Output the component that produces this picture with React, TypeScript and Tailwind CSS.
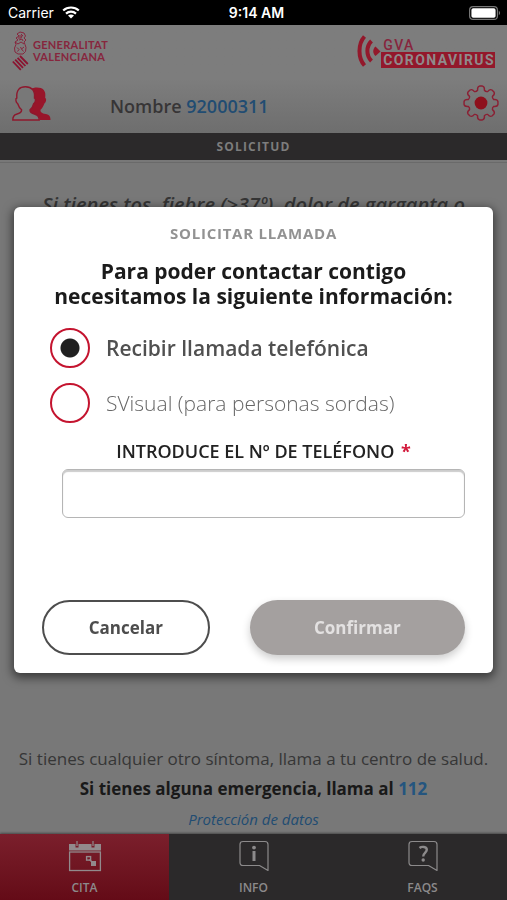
import React, { useState } from 'react';

const point = (radius: number, degrees: number) => {
  const a = (degrees * Math.PI) / 180;
  return `${(18 + radius * Math.cos(a)).toFixed(2)} ${(18 + radius * Math.sin(a)).toFixed(2)}`;
};

// Eight rounded teeth, 45 degrees apart
const gearPath =
  Array.from({ length: 8 }, (_, i) => {
    const t = i * 45;
    return `${i === 0 ? 'M' : 'L'}${point(13.2, t - 15)} Q${point(16.8, t - 13)} ${point(17, t - 5)} L${point(17, t + 5)} Q${point(16.8, t + 13)} ${point(13.2, t + 15)} Q${point(12, t + 22)} ${point(13.2, t + 30)}`;
  }).join(' ') + 'Z';

const GearIcon = () => (
  <svg viewBox="0 0 36 36" className="w-9 h-9" aria-hidden="true">
    <path d={gearPath} fill="none" stroke="#8b1f33" strokeWidth="1.4" strokeLinejoin="round" />
    <circle cx="18" cy="18" r="6.4" fill="#8e101c" />
  </svg>
);

const PeopleIcon = () => (
  <svg viewBox="0 0 39 35" className="w-[39px] h-[35px]" aria-hidden="true">
    <path
      d="M19 3C22 1 29 .8 31.8 4C33.8 6.5 33.4 9 33.2 12C34.8 12.5 34.2 16.5 32.4 17.5C31.4 20.5 30 22.5 28.5 23.8C28.2 26.5 30 27.3 33.5 28C37.500 28.8 38.5 30.5 38.5 34H27.5C27.5 30.5 26 29 22 28C19.5 27.3 17.5 26.5 17.5 24C20 21.5 21 18.5 21.8 17.5C23.5 16 23.5 12.5 22.3 12C23 8 22.5 5 19 3Z"
      fill="#98152a"
    />
    <path
      d="M13.5 .8C7.5 .8 4.2 4 4.8 12C3.2 12.5 3.8 16.5 5.6 17.500C6.6 20.5 8 22.5 9.6 23.8C9.8 26.5 8 27.4 4.5 28.200C1.3 29 .8 31 .8 34H27.2C27.2 31 26.5 29 23 28.2C19.5 27.4 17.8 26.5 18 23.8C19.8 22.500 21 20.5 21.800 17.5C23.7 16.5 24 12.500 22.5 12C23.3 4.500 19.5 .8 13.5 .8Z"
      fill="#787878"
      stroke="#8e182d"
      strokeWidth="1.4"
    />
  </svg>
);

const CrestIcon = () => (
  <svg viewBox="0 0 17 40" className="w-[17px] h-10" fill="none" stroke="#87263d" aria-hidden="true">
    <path d="M5 3L8 1L12 2L13.5 5L12 7L14 9L12 11M5 3L7 5L4 7L6 9L3 11M7 5H10L9 7H6M3 11L4 13.5M12 11L13 13.5M3 11L6 13L9 11L12 13M7 9L10 8L11 10M9 3L11 5" />
    <path d="M4 13.5L2.5 17L3 21L6 23H11L13.5 20.5L14 16.5L13 13.5M5 16.5L7 18.5L5.5 20.5M12 16L9.5 18L8.5 16M9.5 18L11.5 20.5" />
    <path d="M.8 30.5L8.8 38.8M3.2 28.6L11 36.8M5.6 26.8L13.4 35M8 25L15.8 33" stroke="#8a1430" strokeWidth="1.8" />
  </svg>
);

const SignalIcon = () => (
  <svg viewBox="0 0 24 32" className="w-6 h-8" fill="none" stroke="#93182b" aria-hidden="true">
    <path d="M7.5 1.5C.8 9 .8 23 7.500 30.5" strokeWidth="4" />
    <path d="M14.5 6C9 11.5 9 20.5 14.5 26" strokeWidth="4" />
    <path d="M18.5 11.5C15.5 14 15.5 18.5 18.5 21L23.5 16.5Z" fill="#93182b" stroke="none" />
  </svg>
);

const WifiIcon = () => (
  <svg viewBox="0 0 18 13" className="w-[18px] h-[13px]" fill="none" stroke="#fff" strokeWidth="2.2" aria-hidden="true">
    <path d="M1.2 4.5C5.5 .5 12.5 .5 16.8 4.5" />
    <path d="M4 7.6C6.8 5 11.2 5 14 7.6" />
    <path d="M9 12.5L6 9.6C7.8 8.2 10.2 8.2 12 9.6Z" fill="#fff" stroke="none" />
  </svg>
);

const BatteryIcon = () => (
  <svg viewBox="0 0 32 14" className="w-8 h-3.5" aria-hidden="true">
    <rect x=".6" y=".6" width="27.8" height="12.8" rx="3.5" fill="none" stroke="#777" strokeWidth="1.2" />
    <rect x="2.4" y="2.2" width="24.2" height="9.6" rx="1.8" fill="#fff" />
    <path d="M29.8 4.8C31.5 5.5 31.5 8.5 29.8 9.2Z" fill="#777" />
  </svg>
);

const CalendarIcon = () => (
  <svg viewBox="0 0 34 32" className="w-[34px] h-8" aria-hidden="true">
    <path d="M1 4H7.5V7.5H10.5V4H23.5V7.5H26.5V4H33V10.5H1Z" fill="#928a8c" />
    <path d="M9 1V6M25 1V6" stroke="#928a8c" strokeWidth="1.2" />
    <rect x="1.6" y="12" width="30.8" height="18.5" fill="none" stroke="#928a8c" strokeWidth="1.3" />
    <rect x="18.6" y="16.6" width="4" height="3.5" fill="none" stroke="#928a8c" strokeWidth="1.4" />
    <path d="M23 21H28V26H23Z" fill="#928a8c" />
    <path d="M21.5 19.5L24.5 22.5" stroke="#928a8c" strokeWidth="1.5" />
  </svg>
);

const BubbleIcon = ({ children }: { children: React.ReactNode }) => (
  <svg viewBox="0 0 30 32" className="w-[30px] h-8" fill="none" stroke="#8c8a8b" aria-hidden="true">
    <path d="M4 1.5H26Q29 1.5 29 4.5V30.5L20.5 25.5H4Q1 25.5 1 22.5V4.5Q1 1.5 4 1.5Z" strokeWidth="1.2" strokeLinejoin="round" />
    {children}
  </svg>
);

const tabs = [
  {
    label: 'CITA',
    active: true,
    icon: <CalendarIcon />,
  },
  {
    label: 'INFO',
    active: false,
    icon: (
      <BubbleIcon>
        <path d="M15 11V21" strokeWidth="3" />
        <circle cx="15" cy="7.6" r="1.9" fill="#8c8a8b" stroke="none" />
      </BubbleIcon>
    ),
  },
  {
    label: 'FAQS',
    active: false,
    icon: (
      <BubbleIcon>
        <path d="M11.5 8C13.5 6.3 18.8 6.3 18.8 9.8C18.8 12.5 15.2 12.8 15.2 16.5" strokeWidth="2.4" />
        <circle cx="15.2" cy="20" r="1.7" fill="#8c8a8b" stroke="none" />
      </BubbleIcon>
    ),
  },
];

const StatusBar = () => (
  <div className="grid grid-cols-3 items-center h-[25px] pl-2 pr-1.5 bg-black text-white font-['Inter',sans-serif] text-sm">
    <div className="flex items-center gap-2">
      Carrier <WifiIcon />
    </div>
    <div className="pl-1 text-center font-semibold">9:14 AM</div>
    <div className="flex justify-end">
      <BatteryIcon />
    </div>
  </div>
);

const Header = () => (
  <header className="h-[108px] bg-linear-to-b from-[#7d7d7d] via-[#7d7d7d] to-[#6e6e6e] pl-3 pr-2 pt-1.5">
    <div className="flex items-start justify-between">
      <div className="flex items-center gap-1">
        <CrestIcon />
        <div className="font-['Lato',sans-serif] font-bold text-[11px] leading-3 tracking-wide text-[#87263d]">
          GENERALITAT
          <br />
          VALENCIANA
        </div>
      </div>
      <div className="flex items-start pt-1 pr-1 font-['Roboto',sans-serif] font-bold">
        <SignalIcon />
        <div className="flex flex-col items-start pt-1">
          <span className="text-sm leading-[13px] font-medium tracking-widest text-[#87263d] pl-0.5">GVA</span>
          <span className="bg-[#93182b] text-[#8f8a8b] text-sm leading-4 tracking-widest pl-0.5">CORONAVIRUS</span>
        </div>
      </div>
    </div>
    <div className="flex items-center justify-between pt-3.5">
      <button aria-label="Usuarios">
        <PeopleIcon />
      </button>
      <div className="flex-1 pl-[59px] pt-1.5 text-lg leading-6 font-semibold text-[#373536]">
        Nombre <span className="text-[#214c72]">92000311</span>
      </div>
      <button aria-label="Ajustes">
        <GearIcon />
      </button>
    </div>
  </header>
);

interface OptionProps {
  label: string;
  value: string;
  selected: string;
  labelClass: string;
  onSelect: (value: string) => void;
}

const Option: React.FC<OptionProps> = ({ label, value, selected, labelClass, onSelect }) => (
  <label className="flex items-center gap-4">
    <input
      type="radio"
      name="tipo"
      value={value}
      checked={selected === value}
      onChange={() => onSelect(value)}
      className="appearance-none shrink-0 w-10 h-10 rounded-full border-2 border-[#c4142f] bg-white checked:bg-[radial-gradient(circle,#202020_9px,#fff_10px)]"
    />
    <span className={labelClass}>{label}</span>
  </label>
);

const CallDialog = () => {
  const [type, setType] = useState('telefono');
  const [phone, setPhone] = useState('');

  return (
    <div className="fixed inset-0 flex items-center justify-center px-3.5 pb-5">
      <form
        role="dialog"
        aria-labelledby="dialog-title"
        onSubmit={(e) => e.preventDefault()}
        className="w-full max-w-lg bg-white rounded-md shadow-[0_3px_10px_2px_rgba(0,0,0,0.5)] px-7 pt-4 pb-[18px]"
      >
        <h2 id="dialog-title" className="text-center text-[15px] leading-5 font-bold tracking-wider text-[#929292]">
          SOLICITAR LLAMADA
        </h2>
        <p className="mt-4 text-center text-[21px] leading-[25px] font-bold text-[#1b1b1b]">
          Para poder contactar contigo
          <br />
          necesitamos la siguiente información:
        </p>

        <div className="flex flex-col gap-[15px] mt-[19px] pl-2">
          <Option
            label="Recibir llamada telefónica"
            value="telefono"
            selected={type}
            onSelect={setType}
            labelClass="text-[21px] leading-7 font-semibold text-[#505050]"
          />
          <Option
            label="SVisual (para personas sordas)"
            value="svisual"
            selected={type}
            onSelect={setType}
            labelClass="text-[21px] leading-7 font-light text-[#666]"
          />
        </div>

        <div className="mt-4 pl-5">
          <label htmlFor="phone" className="block text-center text-lg leading-6 font-semibold text-[#222]">
            INTRODUCE EL Nº DE TELÉFONO <span className="pl-0.5 font-bold text-[#d3193b]">*</span>
          </label>
          <input
            id="phone"
            type="tel"
            value={phone}
            onChange={(e) => setPhone(e.target.value)}
            className="block w-full h-[49px] mt-1.5 px-3 text-xl rounded-md border border-[#b5b5b5] shadow-[inset_0_2px_1px_#ccc] outline-none"
          />
        </div>

        <div className="grid grid-cols-[7fr_9fr] gap-10 mt-[82px]">
          <button
            type="button"
            className="h-[55px] rounded-full border-2 border-[#4d4d4d] text-[17px] font-bold text-[#4d4d4d]"
          >
            Cancelar
          </button>
          <button
            type="submit"
            disabled={!phone}
            className="h-[55px] rounded-full bg-[#a4a09f] text-[17px] font-bold text-[#e3e1e1] shadow-[0_4px_8px_rgba(0,0,0,0.2)]"
          >
            Confirmar
          </button>
        </div>
      </form>
    </div>
  );
};

export default function App() {
  return (
    <div className="flex flex-col min-h-screen bg-[#787878] font-['Open_Sans',sans-serif]">
      <StatusBar />
      <Header />
      <h1 className="h-[27px] bg-[#2b292a] text-center text-xs leading-[27px] font-bold tracking-widest text-[#7d7d7d]">
        SOLICITUD
      </h1>

      <main className="flex flex-col flex-1 justify-between mt-0.5 border-t border-[#6a6a6a] pt-7 px-3.5 text-center">
        <p className="text-xl leading-7 font-semibold italic text-[#353535]">
          Si tienes tos, fiebre (&gt;37º), dolor de garganta o
        </p>
        <div>
          <p className="text-[17px] leading-[30px] text-[#363636]">
            Si tienes cualquier otro síntoma, llama a tu centro de salud.
          </p>
          <p className="text-[17px] leading-[30px] font-bold text-[#191919]">
            Si tienes alguna emergencia, llama al{' '}
            <a href="tel:112" className="text-[#24557f]">
              112
            </a>
          </p>
          <a href="#datos" className="block text-[15px] leading-[30px] italic text-[#214c72]">
            Protección de datos
          </a>
        </div>
      </main>

      <nav className="grid grid-cols-3 h-[66px] bg-[#2b292a] shadow-[0_-1px_2px_rgba(0,0,0,0.4)]">
        {tabs.map((tab) => (
          <a
            key={tab.label}
            href={`#${tab.label.toLowerCase()}`}
            className={`flex flex-col items-center gap-2 pt-1.5 text-xs leading-4 font-semibold text-[#8c8a8b] ${
              tab.active ? 'bg-linear-to-b from-[#7b1f2c] to-[#640b17]' : ''
            }`}
          >
            {tab.icon}
            {tab.label}
          </a>
        ))}
      </nav>

      <CallDialog />
    </div>
  );
}
